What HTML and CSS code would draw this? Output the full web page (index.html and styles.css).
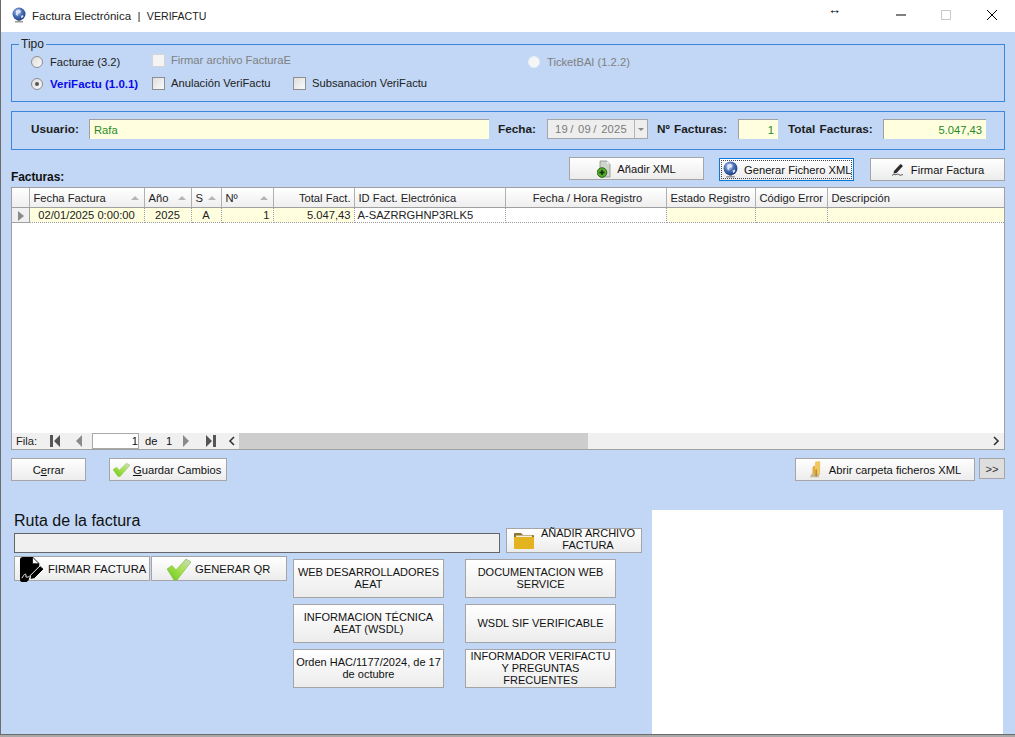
FILE: index.html
```html
<!DOCTYPE html>
<html lang="en">
<head>
    <meta charset="UTF-8">
    <meta name="viewport" content="width=device-width, initial-scale=1.0">
    <title>Factura Electrónica | VERIFACTU</title>
    <link rel="stylesheet" href="styles.css">
</head>
<body>
    <!-- Shared icons -->
    <svg class="icon-defs" width="0" height="0">
        <defs>
            <radialGradient id="globeFill" cx="0.4" cy="0.35" r="0.7">
                <stop offset="0" stop-color="#c6d6f0"/>
                <stop offset="0.5" stop-color="#4a70b8"/>
                <stop offset="1" stop-color="#1b3678"/>
            </radialGradient>
            <linearGradient id="checkFill" x1="0" y1="1" x2="1" y2="0">
                <stop offset="0" stop-color="#64c81e"/>
                <stop offset="0.5" stop-color="#a4e04a"/>
                <stop offset="1" stop-color="#cfdccb"/>
            </linearGradient>
            <symbol id="globe" viewBox="0 0 16 16">
                <path d="M4 15.500h8v-1.500H9.500v-2h-3v2H4z" fill="#9a9a9a"/>
                <circle cx="8" cy="7" r="6.500" fill="url(#globeFill)"/>
                <path d="M5 3.500l3-1 2 1.500-1 2-2 .5-.5 2.500-1.500-1.500zM10 9l2-1 .5 1.500-2 2z" fill="#dce6f6"/>
            </symbol>
            <symbol id="check" viewBox="0 0 24 24" preserveAspectRatio="none">
                <path d="M0 12l5-3.500 4 4.500L19 2l5 3L10 23H7z" fill="url(#checkFill)" stroke="#7ab83a" stroke-width="0.6"/>
            </symbol>
            <symbol id="xmlAdd" viewBox="0 0 14 18">
                <path d="M3 1h7l3 3v13H3z" fill="#cfd4cd" stroke="#8b918a" stroke-width="0.8"/>
                <path d="M10 1v3h3z" fill="#f2f2f2"/>
                <circle cx="5" cy="12.500" r="4.800" fill="#55a82c" stroke="#2f6d18"/>
                <path d="M2.500 11.700h5v1.600h-5z" fill="#10300a"/>
                <path d="M4.200 10h1.600v5H4.200z" fill="#10300a"/>
            </symbol>
            <symbol id="pen" viewBox="0 0 14 14">
                <path d="M3 8l6-6.500c1-.8 3 .6 2.500 2L5.500 10 2.500 10.500z" fill="#2b2b2b"/>
                <path d="M1 12.500c2-2 2.500-.5 4-.8s1.500-1.200 3 0 2 .2 4-.2" fill="none" stroke="#444" stroke-width="0.9"/>
            </symbol>
            <symbol id="signDoc" viewBox="0 0 27 26">
                <path d="M1 3q0-3 3-3h10l7 7v4L11 21l-1 3-2 2H3q-2 0-2-3z" fill="#000"/>
                <path d="M14 0l7 7h-7z" fill="#fff" stroke="#000" stroke-width="0.8"/>
                <path d="M12 19l10-10 4 3.500-10 10-4.500 1z" fill="#000" stroke="#fff" stroke-width="1"/>
                <path d="M3 22c2-3 3-5 4-4s-1 3 1 3 2-1 3-1" fill="none" stroke="#fff" stroke-width="1"/>
            </symbol>
            <symbol id="folder" viewBox="0 0 20 17">
                <path d="M0 2q0-1 1-1h6l2 2h10q1 0 1 1v2H0z" fill="#8c7530"/>
                <path d="M0 5h20v11q0 1-1 1H1q-1 0-1-1z" fill="#e3b420"/>
                <path d="M2 3.500h16V5H2z" fill="#f4efe0"/>
            </symbol>
            <symbol id="folderTall" viewBox="0 0 13 20">
                <path d="M6 1l6-1v16l-4 2H6z" fill="#f0c860"/>
                <path d="M3 7l3-2v12H3z" fill="#e2ad3c"/>
                <path d="M0 19l2-4h8l1 4z" fill="#c8b98c"/>
                <path d="M6.500 10h1.500v8H6.500z" fill="#a8782c"/>
            </symbol>
        </defs>
    </svg>

    <div class="window">
        <header class="titlebar">
            <svg class="title-icon"><use href="#globe"/></svg>
            <span class="title-text">Factura Electrónica &nbsp;|&nbsp; <span class="title-app">VERIFACTU</span></span>
            <span class="resize-cursor">↔</span>
            <div class="window-controls">
                <svg class="win-btn" viewBox="0 0 46 32"><path d="M17 16h10" stroke="#000" fill="none"/></svg>
                <svg class="win-btn" viewBox="0 0 46 32"><path d="M17.500 11.500h9v9h-9z" stroke="#c8c8c8" fill="none"/></svg>
                <svg class="win-btn" viewBox="0 0 46 32"><path d="M18 11l10 10M28 11L18 21" stroke="#000" fill="none"/></svg>
            </div>
        </header>

        <main class="form-body">
            <!-- Tipo -->
            <section class="panel tipo-panel">
                <span class="panel-legend">Tipo</span>
                <label class="opt"><span class="radio"></span>Facturae (3.2)</label>
                <label class="opt opt-check opt-disabled span-two"><span class="checkbox checkbox-disabled"></span>Firmar archivo FacturaE</label>
                <label class="opt opt-disabled"><span class="radio radio-disabled"></span>TicketBAI (1.2.2)</label>
                <label class="opt opt-active"><span class="radio radio-on"></span>VeriFactu (1.0.1)</label>
                <label class="opt opt-check"><span class="checkbox"></span>Anulación VeriFactu</label>
                <label class="opt opt-check"><span class="checkbox"></span>Subsanacion VeriFactu</label>
            </section>

            <!-- Usuario -->
            <section class="panel user-panel">
                <span class="field-label label-user">Usuario:</span>
                <span class="field field-user">Rafa</span>
                <span class="field-label label-date">Fecha:</span>
                <span class="date-field"><span class="date-value">19 / &nbsp;09 / &nbsp;2025</span><span class="date-drop"></span></span>
                <span class="field-label label-num">Nº Facturas:</span>
                <span class="field field-num">1</span>
                <span class="field-label label-total">Total Facturas:</span>
                <span class="field field-total">5.047,43</span>
            </section>

            <div class="toolbar">
                <span class="grid-title">Facturas:</span>
                <button class="btn btn-tool btn-add"><svg class="ic-xml"><use href="#xmlAdd"/></svg>Añadir XML</button>
                <button class="btn btn-tool btn-focus"><span class="focus-inner"><svg class="ic-globe"><use href="#globe"/></svg>Generar Fichero XML</span></button>
                <button class="btn btn-tool"><svg class="ic-pen"><use href="#pen"/></svg>Firmar Factura</button>
            </div>

            <!-- Grid de facturas -->
            <section class="grid">
                <table class="grid-table">
                    <colgroup>
                        <col class="c-head"><col class="c-fecha"><col class="c-anio"><col class="c-s"><col class="c-num">
                        <col class="c-total"><col class="c-id"><col class="c-reg"><col class="c-estado"><col class="c-error"><col class="c-desc">
                    </colgroup>
                    <thead>
                        <tr>
                            <th></th>
                            <th class="sortable">Fecha Factura</th>
                            <th class="sortable">Año</th>
                            <th class="sortable">S</th>
                            <th class="sortable">Nº</th>
                            <th class="th-right">Total Fact.</th>
                            <th>ID Fact. Electrónica</th>
                            <th class="th-center">Fecha / Hora Registro</th>
                            <th>Estado Registro</th>
                            <th>Código Error</th>
                            <th>Descripción</th>
                        </tr>
                    </thead>
                    <tbody>
                        <tr>
                            <td class="row-head"><span class="row-arrow"></span></td>
                            <td class="td-center td-cream">02/01/2025 0:00:00</td>
                            <td class="td-center td-cream">2025</td>
                            <td class="td-center td-cream">A</td>
                            <td class="td-right td-cream">1</td>
                            <td class="td-right td-cream">5.047,43</td>
                            <td>A-SAZRRGHNP3RLK5</td>
                            <td></td>
                            <td class="td-cream"></td>
                            <td class="td-cream"></td>
                            <td class="td-cream"></td>
                        </tr>
                    </tbody>
                </table>
                <div class="grid-fill"></div>
                <div class="grid-footer">
                    <div class="pager">
                        <span class="pager-label">Fila:</span>
                        <svg class="nav nav-first" viewBox="0 0 11 12"><path d="M0 0h3v12H0zM10 0v12L4 6z" fill="#555"/></svg>
                        <svg class="nav nav-prev" viewBox="0 0 7 12"><path d="M6 0v12L0 6z" fill="#8a8a8a"/></svg>
                        <span class="pager-input">1</span>
                        <span class="pager-of">de</span>
                        <span class="pager-total">1</span>
                        <svg class="nav nav-next" viewBox="0 0 7 12"><path d="M0 0v12l6-6z" fill="#8a8a8a"/></svg>
                        <svg class="nav nav-last" viewBox="0 0 11 12"><path d="M11 0H8v12h3zM1 0v12l6-6z" fill="#555"/></svg>
                    </div>
                    <div class="scrollbar">
                        <svg class="scroll-arrow" viewBox="0 0 16 16"><path d="M10 4L6 8l4 4" fill="none" stroke="#333" stroke-width="1.600"/></svg>
                        <div class="scroll-track"><div class="scroll-thumb"></div></div>
                        <svg class="scroll-arrow" viewBox="0 0 16 16"><path d="M6 4l4 4-4 4" fill="none" stroke="#333" stroke-width="1.600"/></svg>
                    </div>
                </div>
            </section>

            <div class="actions">
                <button class="btn btn-close">C<u>e</u>rrar</button>
                <button class="btn btn-save"><svg class="ic-check-sm"><use href="#check"/></svg><span><u>G</u>uardar Cambios</span></button>
                <button class="btn btn-open"><svg class="ic-folder-tall"><use href="#folderTall"/></svg>Abrir carpeta ficheros XML</button>
                <button class="btn btn-more">&gt;&gt;</button>
            </div>

            <div class="lower">
                <div class="lower-left">
                    <h2 class="route-title">Ruta de la factura</h2>
                    <div class="route-row">
                        <span class="route-input"></span>
                        <button class="btn btn-route"><svg class="ic-folder"><use href="#folder"/></svg><span class="route-text">AÑADIR ARCHIVO FACTURA</span></button>
                    </div>
                    <div class="tools-row">
                        <button class="btn btn-sign"><svg class="ic-sign"><use href="#signDoc"/></svg>FIRMAR FACTURA</button>
                        <button class="btn btn-qr"><svg class="ic-check"><use href="#check"/></svg>GENERAR QR</button>
                        <div class="links">
                            <button class="btn btn-link">WEB DESARROLLADORES AEAT</button>
                            <button class="btn btn-link">DOCUMENTACION WEB SERVICE</button>
                            <button class="btn btn-link">INFORMACION TÉCNICA AEAT (WSDL)</button>
                            <button class="btn btn-link">WSDL SIF VERIFICABLE</button>
                            <button class="btn btn-link">Orden HAC/1177/2024, de 17 de octubre</button>
                            <button class="btn btn-link">INFORMADOR VERIFACTU Y PREGUNTAS FRECUENTES</button>
                        </div>
                    </div>
                </div>
                <div class="qr-panel"></div>
            </div>
        </main>
    </div>
</body>
</html>
```

FILE: styles.css
```css
/* Basic reset */
* {
    margin: 0;
    padding: 0;
    box-sizing: border-box;
}

body {
    font-family: "Liberation Sans", Arial, sans-serif;
    font-size: 11.200px;
    color: #111;
    background: #a9a9a9;
    overflow: hidden;
}

.icon-defs {
    position: absolute;
}

.window {
    width: 1015px;
    height: 735px;
    background: #c1d7f5;
    border-left: 1px solid #6d6d6d;
    border-bottom: 1px solid #6d6d6d;
    display: flex;
    flex-direction: column;
    overflow: hidden;
}

/* Title bar */
.titlebar {
    height: 32px;
    flex: none;
    background: #fff;
    display: flex;
    align-items: center;
    position: relative;
}

.title-icon {
    width: 16px;
    height: 16px;
    margin-left: 10px;
    margin-top: -3px;
}

.title-text {
    margin-left: 5px;
    margin-top: -1px;
    font-size: 11.500px;
    color: #222;
}

.title-app {
    font-size: 10.600px;
}

.resize-cursor {
    position: absolute;
    left: 827px;
    top: 2px;
    font-size: 13px;
    font-weight: bold;
    color: #000;
}

.window-controls {
    margin-left: auto;
    display: flex;
    margin-top: -2px;
}

.win-btn {
    width: 46px;
    height: 32px;
    margin-left: -1px;
}

/* Main form */
.form-body {
    flex: 1;
    padding: 12px 10px 0 10px;
    min-height: 0;
}

.panel {
    border: 1px solid #3c87dc;
    position: relative;
}

.panel-legend {
    position: absolute;
    left: 7px;
    top: -7px;
    padding: 0 2px;
    line-height: 13px;
    background: #c1d7f5;
    font-size: 12px;
    color: #222;
}

.tipo-panel {
    height: 58px;
    padding: 6px 0 0 19px;
    display: grid;
    grid-template-columns: 121px 141px 235px 1fr;
    grid-template-rows: 22px 22px;
    align-items: center;
}

.opt {
    display: flex;
    align-items: center;
    gap: 7px;
    white-space: nowrap;
    color: #222;
}

.opt-check {
    margin-top: -2px;
    gap: 6px;
}

.opt-disabled {
    color: #7f7f7f;
}

.opt-active {
    color: #0a0aee;
    font-weight: bold;
    font-size: 11.500px;
}

.span-two {
    grid-column: span 2;
    margin-top: -4px;
}

.radio {
    width: 12px;
    height: 12px;
    border-radius: 50%;
    border: 1px solid #8e8e8e;
    background: linear-gradient(135deg, #dcdcdc, #fafafa);
    flex: none;
    position: relative;
}

.radio-disabled {
    border-color: #e8eef6;
    background: #f6f6f6;
}

.radio-on::after {
    content: "";
    position: absolute;
    left: 3px;
    top: 3px;
    width: 4px;
    height: 4px;
    border-radius: 50%;
    background: #555;
}

.checkbox {
    width: 13px;
    height: 13px;
    flex: none;
    border: 1px solid #8e8e8e;
    background: linear-gradient(135deg, #dedede, #fafafa);
}

.checkbox-disabled {
    border-color: #d5d5d5;
    background: #f4f4f4;
}

/* Usuario row */
.user-panel {
    height: 39px;
    margin-top: 9px;
    padding-top: 7px;
    display: flex;
    align-items: flex-start;
}

.field-label {
    font-size: 11.800px;
    line-height: 20px;
    font-weight: bold;
    color: #1c1c1c;
    white-space: nowrap;
    word-spacing: 1px;
}

.field {
    height: 20px;
    line-height: 20px;
    background: #ffffe0;
    color: #1f8a1f;
    border-left: 1px solid #a0a0a0;
    border-top: 1px solid #a0a0a0;
    padding: 0 4px;
}

.label-user { width: 58px; margin-left: 19px; }
.field-user { width: 400px; }
.label-date { width: 49px; margin-left: 9px; }
.label-num { width: 81px; margin-left: 9px; }
.field-num { width: 40px; text-align: right; }
.label-total { width: 95px; margin-left: 10px; }
.field-total { width: 103px; text-align: right; }

.date-field {
    width: 101px;
    height: 20px;
    border: 1px solid #a6a6a6;
    background: #eeeeee;
    display: flex;
    align-items: center;
    color: #7a7a7a;
}

.date-value {
    flex: 1;
    padding-left: 7px;
    white-space: nowrap;
    letter-spacing: 0.2px;
    word-spacing: -1px;
}

.date-drop {
    width: 13px;
    height: 18px;
    border-left: 1px solid #b5b5b5;
    position: relative;
}

.date-drop::after {
    content: "";
    position: absolute;
    left: 3px;
    top: 8px;
    border: 3px solid transparent;
    border-top: 3px solid #888;
}

/* Buttons */
.btn {
    font-family: inherit;
    font-size: 11.200px;
    color: #111;
    border: 1px solid #a5a5a5;
    background: linear-gradient(#ffffff, #ececec);
    display: flex;
    align-items: center;
    justify-content: center;
}

.toolbar {
    height: 24px;
    margin-top: 7px;
    display: flex;
    align-items: flex-end;
    gap: 15px;
}

.grid-title {
    font-size: 12px;
    font-weight: bold;
    margin-right: auto;
    line-height: 14px;
    margin-bottom: -3px;
    letter-spacing: -0.1px;
}

.btn-tool {
    width: 135px;
    height: 23px;
    flex: none;
}

.btn-add {
    align-self: flex-start;
}

.btn-focus {
    border: 1px solid #0a78d7;
    padding: 1px;
    margin-right: 1px;
}

.focus-inner {
    width: 100%;
    height: 100%;
    border: 1px dotted #444;
    display: flex;
    align-items: center;
    white-space: nowrap;
}

.ic-xml { width: 14px; height: 18px; margin-right: 6px; flex: none; }
.ic-globe { width: 17px; height: 17px; margin-right: 5px; flex: none; }
.ic-pen { width: 14px; height: 14px; margin-right: 6px; flex: none; }

/* Data grid */
.grid {
    margin-top: 6px;
    height: 263px;
    background: #fff;
    border: 1px solid #a0a0a0;
    display: flex;
    flex-direction: column;
}

.grid-table {
    border-collapse: collapse;
    table-layout: fixed;
    width: 992px;
    flex: none;
}

.c-head { width: 17px; }
.c-fecha { width: 115px; }
.c-anio { width: 47px; }
.c-s { width: 30px; }
.c-num { width: 52px; }
.c-total { width: 81px; }
.c-id { width: 151px; }
.c-reg { width: 161px; }
.c-estado { width: 89px; }
.c-error { width: 72px; }
.c-desc { width: 177px; }

.grid-table th {
    height: 19px;
    font-weight: normal;
    text-align: left;
    padding: 2px 0 0 4px;
    white-space: nowrap;
    overflow: hidden;
    background: linear-gradient(#ffffff, #eeeeee);
    border-right: 1px solid #b0b0b0;
    border-bottom: 1px solid #a0a0a0;
    color: #222;
}

.grid-table th:last-child {
    border-right: 0;
}

.sortable {
    position: relative;
}

.sortable::after {
    content: "";
    position: absolute;
    right: 5px;
    top: 8px;
    border: 4px solid transparent;
    border-top: 0;
    border-bottom: 4px solid #b5b5b5;
}

.grid-table .th-right { text-align: right; padding-right: 3px; }
.grid-table .th-center { text-align: center; }

.grid-table td {
    height: 15px;
    line-height: 13px;
    padding: 1px 3px 0;
    white-space: nowrap;
    overflow: hidden;
    border-right: 1px dotted #9a9a9a;
    border-bottom: 1px dotted #9a9a9a;
    color: #222;
}

.grid-table td:last-child {
    border-right: 0;
}

.td-cream { background: #ffffe0; }
.td-center { text-align: center; }
.td-right { text-align: right; }

.grid-table .row-head {
    background: #f0f0f0;
    border-right: 1px solid #a0a0a0;
    border-bottom: 1px solid #a0a0a0;
    position: relative;
}

.row-arrow {
    position: absolute;
    left: 6px;
    top: 3px;
    border: 5px solid transparent;
    border-right: 0;
    border-left: 6px solid #8a8a8a;
}

.grid-fill {
    flex: 1;
}

.grid-footer {
    height: 16px;
    flex: none;
    display: flex;
}

.pager {
    width: 212px;
    background: #f0f0f0;
    display: flex;
    align-items: center;
    padding-left: 4px;
    flex: none;
}

.pager-label { width: 34px; color: #222; }

.nav {
    height: 12px;
    flex: none;
}

.nav-first { width: 11px; }
.nav-prev { width: 7px; margin-left: 15px; }
.pager-input {
    width: 47px;
    height: 16px;
    margin-left: 9px;
    line-height: 14px;
    border: 1px solid #a8a8a8;
    background: #fff;
    text-align: right;
}
.pager-of { margin-left: 6px; width: 12px; }
.pager-total { margin-left: 9px; width: 6px; }
.nav-next { width: 7px; margin-left: 11px; }
.nav-last { width: 11px; margin-left: 15px; }

.scrollbar {
    flex: 1;
    display: flex;
    background: #f0f0f0;
}

.scroll-arrow {
    width: 16px;
    height: 16px;
    flex: none;
}

.scroll-track {
    flex: 1;
}

.scroll-thumb {
    width: 349px;
    height: 100%;
    margin-left: -1px;
    background: #cdcdcd;
}

/* Bottom buttons */
.actions {
    height: 23px;
    margin-top: 8px;
    display: flex;
}

.btn-close { width: 75px; }

.btn-save {
    width: 118px;
    margin-left: 23px;
    gap: 3px;
    justify-content: flex-start;
    padding-left: 3px;
    white-space: nowrap;
}

.ic-check-sm { width: 17px; height: 15px; flex: none; }

.btn-open {
    width: 180px;
    margin-left: auto;
    white-space: nowrap;
}

.ic-folder-tall { width: 13px; height: 17px; margin-right: 7px; flex: none; }

.btn-more {
    width: 26px;
    height: 21px;
    margin-left: 4px;
    background: #dedede;
    color: #333;
}

/* Lower part */
.lower {
    margin-top: 29px;
    display: flex;
    align-items: flex-start;
}

.lower-left {
    width: 631px;
    padding-left: 3px;
}

.route-title {
    font-size: 16px;
    font-weight: normal;
    line-height: 21px;
    height: 18px;
    color: #111;
}

.route-row {
    display: flex;
    align-items: flex-end;
    gap: 6px;
}

.route-input {
    width: 486px;
    height: 20px;
    border: 1px solid #666;
    background: #f0f0f0;
}

.btn-route {
    width: 136px;
    height: 25px;
    padding-left: 7px;
    gap: 5px;
    font-size: 11px;
    line-height: 12px;
}

.ic-folder { width: 20px; height: 17px; flex: none; }
.route-text { flex: 1; text-align: center; padding: 0 4px 3px 0; }

.tools-row {
    display: flex;
    align-items: flex-start;
    margin-top: 3px;
}

.btn-sign {
    width: 136px;
    height: 25px;
    margin-right: 1px;
    justify-content: flex-start;
    padding-left: 4px;
    gap: 3px;
    white-space: nowrap;
}

.ic-sign { width: 26px; height: 25px; flex: none; margin-top: 1px; }

.btn-qr {
    width: 136px;
    height: 25px;
    gap: 4px;
    justify-content: flex-start;
    padding-left: 15px;
    white-space: nowrap;
}

.ic-check { width: 24px; height: 24px; flex: none; }

.links {
    margin-left: 6px;
    margin-top: 3px;
    display: grid;
    grid-template-columns: 151px 151px;
    grid-auto-rows: 39px;
    column-gap: 21px;
    row-gap: 6px;
}

.btn-link {
    font-size: 11px;
    line-height: 12px;
    padding: 0 2px 2px;
}

.qr-panel {
    width: 351px;
    height: 224px;
    margin-left: 10px;
    background: #fff;
}
```
